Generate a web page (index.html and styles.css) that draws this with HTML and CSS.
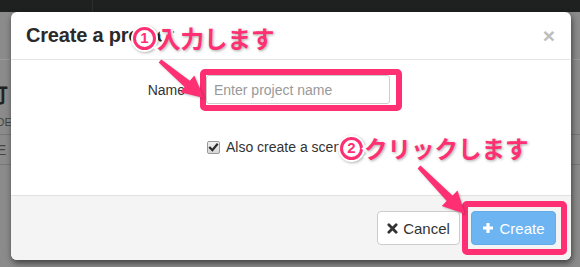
FILE: index.html
```html
<!DOCTYPE html>
<html lang="ja">
<head>
<meta charset="utf-8">
<title>Create a project</title>
<link rel="stylesheet" href="styles.css">
</head>
<body>
<div class="topbar"><div class="topbar-left"></div></div>
<div class="page">
  <div class="page-head"></div>
  <div class="page-title">打</div>
  <div class="page-th">ODE</div>
  <div class="page-row">LE</div>
</div>

<div class="modal">
  <div class="modal-header">
    <h4 class="modal-title">Create a project</h4>
    <span class="close">×</span>
  </div>
  <div class="modal-body">
    <div class="form-row">
      <label class="form-label">Name</label>
      <input class="form-input" type="text" placeholder="Enter project name">
    </div>
    <div class="check-row">
      <span class="checkbox">
        <svg viewBox="0 0 13 13" width="13" height="13"><path d="M3 6.8 L5.4 9.2 L10 3.6" fill="none" stroke="#2b2b2b" stroke-width="2.2" stroke-linecap="square"/></svg>
      </span>
      <span class="check-label">Also create a scenario</span>
    </div>
  </div>
  <div class="modal-footer">
    <button class="btn btn-default">
      <svg class="ico" viewBox="0 0 12 12" width="11" height="11"><path d="M2 2 L10 10 M10 2 L2 10" stroke="#333" stroke-width="3" stroke-linecap="round"/></svg>
      Cancel
    </button>
    <button class="btn btn-primary">
      <svg class="ico" viewBox="0 0 12 12" width="12" height="12"><path d="M6 1 V11 M1 6 H11" stroke="#fff" stroke-width="3.2"/></svg>
      Create
    </button>
  </div>
</div>

<div class="mark mark-input"></div>
<div class="mark mark-create"></div>

<svg class="arrows" width="580" height="267" viewBox="0 0 580 267">
  <polygon points="158.7,62.5 161.3,59.5 189.8,80.8 194.3,75.5 204,98 180.1,92.3 184.6,87" fill="#fe2f72"/>
  <polygon points="417.6,168.4 420.4,165.6 452.5,195.5 457.5,190.6 465,214 441.8,206 446.7,201.1" fill="#fe2f72"/>
</svg>

<div class="note note-1"><span class="num">1</span><span class="note-text">入力します</span></div>
<div class="note note-2"><span class="num">2</span><span class="note-text">クリックします</span></div>
</body>
</html>
```

FILE: styles.css
```css
html, body {
  margin: 0;
  padding: 0;
}
body {
  width: 580px;
  height: 267px;
  overflow: hidden;
  background: #8b8b8b;
  font-family: "Liberation Sans", Arial, sans-serif;
  color: #333;
  position: relative;
}
.topbar {
  height: 12px;
  background: #1f2020;
}
.topbar-left {
  width: 92px;
  height: 12px;
  border-right: 1px solid #2c2d2d;
}
.page {
  margin-left: -12px;
}
.page-head {
  height: 47px;
  border-bottom: 1px solid #9a9a9a;
}
.page-title {
  margin-top: 20px;
  font: bold 20px "Noto Sans CJK JP", sans-serif;
  color: #222;
  height: 30px;
}
.page-th {
  font-size: 11px;
  color: #444;
  height: 24px;
  line-height: 24px;
  border-bottom: 1px solid #777;
}
.page-row {
  font-size: 15px;
  color: #444;
  height: 29px;
  line-height: 29px;
  border-bottom: 1px solid #777;
}

.modal {
  position: absolute;
  left: 11px;
  top: 12px;
  width: 560px;
  height: 248px;
  background: #fff;
  border-radius: 6px;
  box-shadow: 1px 3px 6px rgba(0, 0, 0, 0.55);
  display: flex;
  flex-direction: column;
  overflow: hidden;
}
.modal-header {
  height: 47px;
  border-bottom: 1px solid #e5e5e5;
  display: flex;
  align-items: center;
  justify-content: space-between;
  padding: 0 16px 0 15px;
}
.modal-title {
  margin: 0;
  font-size: 20px;
  font-weight: bold;
  color: #2a2a2a;
  letter-spacing: -0.2px;
}
.close {
  font-size: 21px;
  font-weight: bold;
  color: #bdbdbd;
  line-height: 1;
}
.modal-body {
  flex: 1;
  padding-top: 15px;
}
.form-row {
  display: grid;
  grid-template-columns: 174px 184px;
  column-gap: 21px;
  align-items: center;
}
.form-label {
  text-align: right;
  font-size: 14px;
  color: #333;
}
.form-input {
  box-sizing: border-box;
  height: 29px;
  width: 184px;
  margin: 0;
  border: 1px solid #ccc;
  border-radius: 3px;
  padding: 0 7px;
  font-family: "Liberation Sans", Arial, sans-serif;
  font-size: 14px;
  color: #555;
}
.form-input::placeholder {
  color: #999;
}
.check-row {
  display: flex;
  align-items: center;
  margin-top: 35px;
  margin-left: 196px;
}
.checkbox {
  box-sizing: border-box;
  width: 13px;
  height: 13px;
  border: 1px solid #9a9a9a;
  border-radius: 2px;
  background: linear-gradient(#f0f0f0, #d8d8d8);
  display: flex;
  overflow: hidden;
}
.checkbox svg {
  margin: -1px;
}
.check-label {
  margin-left: 6px;
  font-size: 14px;
  color: #333;
}
.modal-footer {
  height: 34px;
  padding: 15px;
  background: #f4f4f4;
  border-top: 1px solid #e1e1e1;
  display: flex;
  justify-content: flex-end;
  gap: 11px;
}
.btn {
  box-sizing: border-box;
  height: 34px;
  border-radius: 4px;
  font-family: "Liberation Sans", Arial, sans-serif;
  font-size: 15px;
  display: flex;
  align-items: center;
  justify-content: center;
  gap: 5px;
  padding: 0;
}
.btn-default {
  width: 83px;
  background: #fff;
  border: 1px solid #ccc;
  color: #333;
}
.btn-primary {
  width: 85px;
  background: #6cb4f2;
  border: 1px solid #63acea;
  color: #fff;
}
.ico {
  display: block;
}

.mark {
  position: absolute;
  box-sizing: border-box;
  border: 6px solid #fe2f72;
  border-radius: 5px;
}
.mark-input {
  left: 200px;
  top: 69px;
  width: 202px;
  height: 42px;
}
.mark-create {
  left: 462px;
  top: 201px;
  width: 105px;
  height: 54px;
}
.arrows {
  position: absolute;
  left: 0;
  top: 0;
  filter: drop-shadow(1px 1px 1px rgba(0, 0, 0, 0.25));
}
.note {
  position: absolute;
  display: flex;
  align-items: center;
  gap: 1px;
  white-space: nowrap;
}
.num {
  box-sizing: border-box;
  width: 23px;
  height: 23px;
  border: 3.5px solid #fe2f72;
  border-radius: 50%;
  background: #fff;
  box-shadow: 0 0 0 2px #fff, 1px 1px 3px 2px rgba(0, 0, 0, 0.3);
  color: #fe2f72;
  font-family: "Liberation Sans", Arial, sans-serif;
  font-weight: bold;
  font-size: 15px;
  line-height: 16px;
  text-align: center;
}
.note-text {
  font-family: "Noto Sans CJK JP", sans-serif;
  font-weight: bold;
  font-size: 23.5px;
  line-height: 1;
  color: #fe2f72;
  -webkit-text-stroke: 5px #fff;
  paint-order: stroke fill;
  text-shadow: 1px 1px 3px rgba(0, 0, 0, 0.35);
}
.note-1 {
  left: 133px;
  top: 27px;
}
.note-2 {
  left: 340px;
  top: 137px;
}
```
